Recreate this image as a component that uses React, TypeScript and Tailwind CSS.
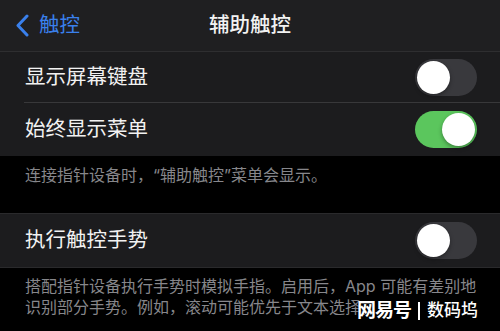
import React from 'react';

const font = { fontFamily: 'Inter, "Noto Sans CJK SC", sans-serif' };

function Toggle({ on }: { on: boolean }) {
  return (
    <div
      className={`w-[62px] h-[37px] rounded-full p-[2px] flex items-center ${
        on ? 'bg-[#5bc65d] justify-end' : 'bg-[#39393d] justify-start'
      }`}
    >
      <div className="w-[33px] h-[33px] rounded-full bg-white shadow-[0_2px_4px_rgba(0,0,0,0.35)]" />
    </div>
  );
}

function Row({ label, on, className = '' }: { label: string; on: boolean; className?: string }) {
  return (
    <div className={`flex items-center justify-between pl-[25px] pr-[23px] ${className}`}>
      <span className="text-[20.5px] text-[#f2f2f2] leading-none">{label}</span>
      <Toggle on={on} />
    </div>
  );
}

export default function App() {
  return (
    <div className="relative w-[500px] h-[331px] overflow-hidden bg-black select-none" style={font}>
      {/* Nav bar */}
      <header className="h-[52px] bg-[#1f1f21] border-b border-[#2e2e30] flex items-center relative">
        <div className="flex items-center pl-[15px] gap-[10px] text-[#3a80ec]">
          <svg width="14" height="23" viewBox="0 0 14 23" fill="none">
            <path d="M12 2 L3 11.5 L12 21" stroke="currentColor" strokeWidth="3" strokeLinecap="round" strokeLinejoin="round" />
          </svg>
          <span className="text-[20.5px] leading-none">触控</span>
        </div>
        <h1 className="absolute left-0 right-0 text-center text-[20.5px] font-medium text-[#f2f2f2] leading-none pointer-events-none">
          辅助触控
        </h1>
      </header>

      {/* Group 1 */}
      <div className="bg-[#1c1c1e]">
        <Row label="显示屏幕键盘" on={false} className="h-[50px]" />
        <div className="ml-[24px] h-px bg-[#38383a]" />
        <Row label="始终显示菜单" on={true} className="h-[53px]" />
      </div>
      <div className="h-[57px] px-[25px] pt-[8px] text-[16px] leading-[22px] text-[#87878b]">
        连接指针设备时，“辅助触控”菜单会显示。
      </div>

      {/* Group 2 */}
      <div className="bg-[#1c1c1e] border-y border-[#2a2a2c]">
        <Row label="执行触控手势" on={false} className="h-[53px]" />
      </div>
      <div className="px-[25px] pt-[8px] pr-[20px] text-[16px] leading-[21px] text-[#87878b]">
        搭配指针设备执行手势时模拟手指。启用后，App 可能有差别地识别部分手势。例如，滚动可能优先于文本选择。
      </div>

      {/* Watermark */}
      <div className="absolute right-[22px] bottom-[11px] flex items-center text-white [text-shadow:0_0_3px_rgba(0,0,0,0.9)]">
        <span className="text-[19px] font-bold leading-none tracking-[-1px]">网易号</span>
        <span className="mx-[7px] w-[2px] h-[18px] bg-white" />
        <span className="text-[17px] font-medium leading-none">数码坞</span>
      </div>
    </div>
  );
}
